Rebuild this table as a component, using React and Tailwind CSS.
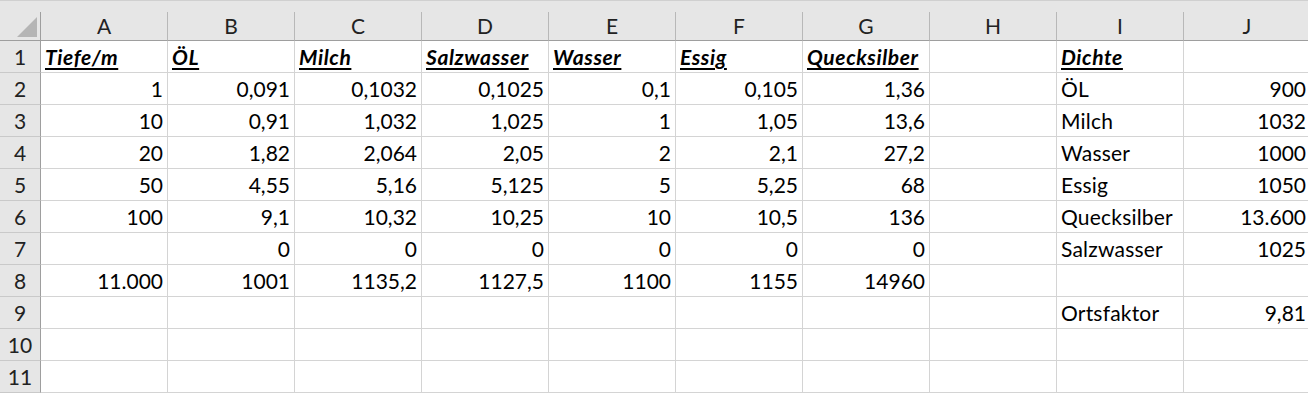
import React from 'react';

const cols = ['A', 'B', 'C', 'D', 'E', 'F', 'G', 'H', 'I', 'J'];

// each cell: [text, 'r' | 'l' | 'h']  h = bold italic underlined heading
const rows = [
    [['Tiefe/m', 'h'], ['ÖL', 'h'], ['Milch', 'h'], ['Salzwasser', 'h'], ['Wasser', 'h'], ['Essig', 'h'], ['Quecksilber', 'h'], null, ['Dichte', 'h'], null],
    [['1', 'r'], ['0,091', 'r'], ['0,1032', 'r'], ['0,1025', 'r'], ['0,1', 'r'], ['0,105', 'r'], ['1,36', 'r'], null, ['ÖL', 'l'], ['900', 'r']],
    [['10', 'r'], ['0,91', 'r'], ['1,032', 'r'], ['1,025', 'r'], ['1', 'r'], ['1,05', 'r'], ['13,6', 'r'], null, ['Milch', 'l'], ['1032', 'r']],
    [['20', 'r'], ['1,82', 'r'], ['2,064', 'r'], ['2,05', 'r'], ['2', 'r'], ['2,1', 'r'], ['27,2', 'r'], null, ['Wasser', 'l'], ['1000', 'r']],
    [['50', 'r'], ['4,55', 'r'], ['5,16', 'r'], ['5,125', 'r'], ['5', 'r'], ['5,25', 'r'], ['68', 'r'], null, ['Essig', 'l'], ['1050', 'r']],
    [['100', 'r'], ['9,1', 'r'], ['10,32', 'r'], ['10,25', 'r'], ['10', 'r'], ['10,5', 'r'], ['136', 'r'], null, ['Quecksilber', 'l'], ['13.600', 'r']],
    [null, ['0', 'r'], ['0', 'r'], ['0', 'r'], ['0', 'r'], ['0', 'r'], ['0', 'r'], null, ['Salzwasser', 'l'], ['1025', 'r']],
    [['11.000', 'r'], ['1001', 'r'], ['1135,2', 'r'], ['1127,5', 'r'], ['1100', 'r'], ['1155', 'r'], ['14960', 'r'], null, null, null],
    [null, null, null, null, null, null, null, null, ['Ortsfaktor', 'l'], ['9,81', 'r']],
    [null, null, null, null, null, null, null, null, null, null],
    [null, null, null, null, null, null, null, null, null, null],
];

const Cell = ({ cell }) => {
    if (!cell) return <div className="h-[32px] border-r border-b border-[#d4d4d4]"></div>;
    const [text, kind] = cell;
    return (
        <div className={`h-[32px] border-r border-b border-[#d4d4d4] flex items-center px-[4px] whitespace-nowrap overflow-visible ${kind === 'r' ? 'justify-end' : 'justify-start'}`}>
            {kind === 'h' && (
                <span className="font-bold italic tracking-[0.6px] underline decoration-[2px] underline-offset-[3px]">{text}</span>
            )}
            {kind === 'l' && <span className="tracking-[0.2px]">{text}</span>}
            {kind === 'r' && <span>{text}</span>}
        </div>
    );
};

const App = () => {
    return (
        <div className="w-[1308px] h-[393px] overflow-hidden bg-white text-black text-[21px] font-['Lato','Carlito',sans-serif]">
            <div className="h-[12px] bg-[#e6e6e6] border-t border-[#d0d0d0]"></div>
            <div className="w-[1311px] grid grid-cols-[41px_repeat(10,127px)]">
                {/* header row */}
                <div className="h-[29px] bg-[#e6e6e6] border-r border-b border-[#9e9e9e] relative">
                    <svg className="absolute left-[16px] top-[4px]" width="22" height="22" viewBox="0 0 22 22">
                        <polygon points="21,1 21,21 1,21" fill="#b5b5b5" />
                    </svg>
                </div>
                {cols.map((c) => (
                    <div key={c} className="h-[29px] bg-[#e6e6e6] border-r border-r-[#b8b8b8] border-b border-b-[#9e9e9e] flex items-center justify-center text-[#222]">
                        {c}
                    </div>
                ))}

                {rows.map((r, i) => (
                    <React.Fragment key={i}>
                        <div className="h-[32px] bg-[#e6e6e6] border-r border-r-[#9e9e9e] border-b border-b-[#c9c9c9] flex items-center justify-center text-[#222]">
                            {i + 1}
                        </div>
                        {r.map((cell, j) => (
                            <Cell key={j} cell={cell} />
                        ))}
                    </React.Fragment>
                ))}
            </div>
        </div>
    );
};

export default App;
